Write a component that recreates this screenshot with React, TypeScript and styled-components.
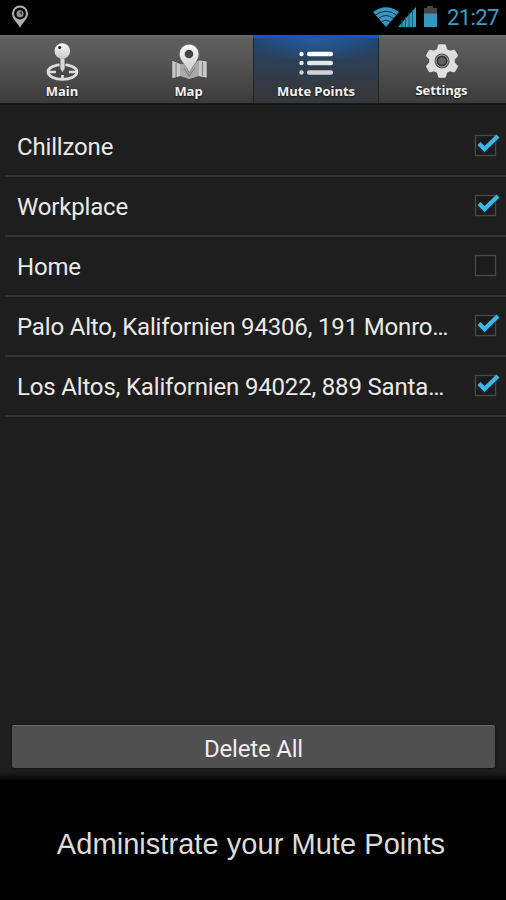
import React from 'react';
import styled, { createGlobalStyle, css } from 'styled-components';

const GlobalStyle = createGlobalStyle`
  * { box-sizing: border-box; }
  body { margin: 0; background: #000; }
`;

const Screen = styled.div`
  width: 506px;
  height: 900px;
  display: flex;
  flex-direction: column;
  background: #000;
  overflow: hidden;
  font-family: Roboto, 'Liberation Sans', sans-serif;
`;

const StatusBar = styled.header`
  height: 35px;
  flex: none;
  display: flex;
  justify-content: space-between;
  padding: 0 8px 0 11px;
`;

const StatusGroup = styled.div`
  display: flex;
  align-items: flex-start;
`;

const Clock = styled.span`
  color: #3b9fc8;
  font-size: 22px;
  line-height: 26px;
  margin-top: 5px;
  width: 51px;
  letter-spacing: -0.6px;
  white-space: nowrap;
`;

const TabBar = styled.nav`
  height: 70px;
  flex: none;
  display: grid;
  grid-template-columns: 253px 126px 127px;
  background: #1a1a1a;
  border-bottom: 2px solid #171717;
`;

const TabPair = styled.div`
  display: grid;
  grid-template-columns: 126px 127px;
`;

const Tab = styled.button<{ $active?: boolean }>`
  display: flex;
  flex-direction: column;
  align-items: center;
  margin: 0;
  padding: 5px 2px 0 0;
  border: 0;
  border-top: 2px solid #686868;
  background: linear-gradient(#5f5f5f, #555 35%, #3b3b3b);
  ${(p) =>
    p.$active &&
    css`
      border-top: 3px solid #1053dc;
      padding: 4px 0 0;
      box-shadow: inset 1px 0 #222, inset -1px 0 #222;
      background: radial-gradient(ellipse 65px 24px at 50% 0, rgba(36, 105, 185, 0.65), transparent),
        linear-gradient(#1f4773, #2c4056 35%, #333a43 70%, #383838);
    `}
`;

const TabLabel = styled.span<{ $lift?: number }>`
  font: bold 13px/16px 'Open Sans', 'Noto Sans', sans-serif;
  color: #f2f2f2;
  letter-spacing: -0.05px;
  margin-top: ${(p) => -(p.$lift ?? 0)}px;
  text-shadow: 0 1px 2px #111;
  white-space: nowrap;
`;

const Icon = styled.svg`
  display: block;
  flex: none;
`;

const Content = styled.main`
  flex: none;
  height: 675px;
  display: flex;
  flex-direction: column;
  justify-content: space-between;
  padding-top: 12px;
  background: linear-gradient(#1e1e1e 0 98.7%, #060606);
`;

const List = styled.ul`
  list-style: none;
  margin: 0;
  padding: 0 0 0 5px;
`;

const Row = styled.li`
  height: 60px;
  display: flex;
  align-items: center;
  justify-content: space-between;
  padding: 0 6px 0 12px;
  border-bottom: 2px solid #343434;
`;

const RowLabel = styled.span`
  color: #e9e9e9;
  font-size: 24px;
  line-height: 30px;
  padding-top: 2px;
  letter-spacing: -0.17px;
  white-space: nowrap;
`;

const DeleteButton = styled.button`
  height: 43px;
  margin: 0 11px 12px 12px;
  padding: 3px 0 0;
  border: 0;
  border-top: 1px solid #686868;
  border-radius: 2px;
  background: #505050;
  box-shadow: 0 1px 2px #111;
  color: #ededed;
  font: 24px/28px Roboto, sans-serif;
  letter-spacing: -0.2px;
`;

const Caption = styled.footer`
  flex: 1;
  display: flex;
  align-items: center;
  justify-content: center;
  padding: 8px 4px 0 0;
  color: #dcdcdc;
  font: 29px/32px 'Liberation Sans', Arial, sans-serif;
  letter-spacing: 0.05px;
  white-space: nowrap;
`;

const MetalGradient = ({ id }: { id: string }) => (
  <linearGradient id={id} x1="0" y1="0" x2="0" y2="1">
    <stop offset="0" stopColor="#fafafa" />
    <stop offset="1" stopColor="#c9c9c9" />
  </linearGradient>
);

const StatusPin = () => (
  <Icon width="19" height="35" viewBox="0 0 19 35">
    <path d="M9 28C7.500 23.500 1 19.500 1 13.500a8 8 0 0 1 16 0C17 19.500 10.500 23.500 9 28Z" fill="#b0b0b0" />
    <circle cx="9" cy="13.500" r="6" fill="#0b0b0b" />
    <circle cx="9" cy="13.800" r="3.500" fill="#929292" />
    <path d="M8 13l3-2v4z" fill="#444" />
  </Icon>
);

const StatusIcons = () => (
  <Icon width="74" height="35" viewBox="373 0 74 35">
    <path d="M373 12Q386 2.500 399 12L386 27Z" fill="#3697bf" />
    <g fill="none" stroke="#0b2f3d" strokeWidth="1">
      <path d="M375.500 15Q386 7.500 396.500 15M378.500 18.500Q386 12.500 393.500 18.500M381.500 22Q386 18.500 390.500 22" />
    </g>
    <path d="M398 27L416 7V27Z" fill="#3697bf" />
    <path d="M402 20V27M405.500 17V27M409 13V27M412.500 10V27" stroke="#1a5a73" strokeWidth="1" />
    <path d="M424 8h3V6h6v2h4v7h-13z" fill="#454545" />
    <path d="M424 13.500h13V27h-13z" fill="#3697bf" />
  </Icon>
);

const MainIcon = () => (
  <Icon width="40" height="41" viewBox="42 42 40 41">
    <defs><MetalGradient id="main-metal" /></defs>
    <ellipse cx="62.500" cy="72" rx="14.500" ry="7.300" fill="#484848" stroke="#ddd" strokeWidth="2.800" />
    <path d="M48 72h8M69 72h8M62.500 75v5" stroke="#ddd" strokeWidth="2.600" />
    <path d="M60 58h5v11l-2.500 3.500L60 69z" fill="#d8d8d8" stroke="#444" strokeWidth=".7" />
    <circle cx="62.300" cy="51" r="7.800" fill="url(#main-metal)" />
    <circle cx="59.700" cy="47.500" r="1.500" fill="#242424" />
  </Icon>
);

const MapIcon = () => (
  <Icon width="40" height="41" viewBox="169 42 40 41">
    <defs><MetalGradient id="map-metal" /></defs>
    <path d="M172.500 61l7.500 3 9 0 10-3.500 7.500 1v16l-7.500-1.500-10 3-9-3-7.500 2z" fill="#aaa" />
    <path d="M172.500 61l7.500 3v12l-7.500 2zM199 60.500l7.500 1v16L199 76z" fill="#c9c9c9" />
    <path d="M176 63v14M184 68l5 8 6-8M202.500 62v14" stroke="#818181" strokeWidth="1.200" fill="none" />
    <path d="M189.500 73C186.500 66 179.300 60.500 179.300 54a9.800 9.800 0 0 1 19.600 0C198.900 60.500 192.500 66 189.500 73Z" fill="url(#map-metal)" stroke="#666" strokeWidth=".6" />
    <circle cx="189" cy="54" r="4.300" fill="#454545" />
  </Icon>
);

const ListIcon = () => (
  <Icon width="40" height="41" viewBox="296 42 40 41">
    {[54, 63, 72.500].map((y, i) => (
      <g key={y} fill={['#fff', '#e4e4e4', '#d3d3d3'][i]}>
        <circle cx="301.500" cy={y} r="2.200" />
        <rect x="307" y={y - 2.200} width="26" height="4.400" rx="2" />
      </g>
    ))}
  </Icon>
);

const teeth = [0, 60, 120, 180, 240, 300];

const GearIcon = () => (
  <Icon width="40" height="41" viewBox="422 42 40 41">
    <g fill="#dedede">
      <circle cx="442" cy="61" r="12.800" />
      {teeth.map((angle) => (
        <path key={angle} d="M436.500 51l1.500-5.500q.3-1.200 1.500-1.200h5q1.200 0 1.500 1.200l1.500 5.500z" transform={`rotate(${angle} 442 61)`} />
      ))}
    </g>
    <circle cx="442" cy="61" r="7.500" fill="#4c4c4c" />
    <circle cx="442" cy="61" r="6" fill="none" stroke="#aaa" strokeWidth="1" />
    <circle cx="442" cy="61" r="4.600" fill="#606060" stroke="#333" strokeWidth="1.500" />
  </Icon>
);

const Checkbox = ({ checked }: { checked: boolean }) => (
  <Icon width="26" height="28" viewBox="0 1 26 28" role="checkbox" aria-checked={checked}>
    <rect x="1.500" y="4.500" width="20" height="20" fill="#1b1b1b" stroke="#484848" strokeWidth="1.400" />
    {checked && (
      <>
        <path d="M4.500 13.500l6 5.500L24 6" fill="none" stroke="#143746" strokeWidth="6" opacity=".6" />
        <path d="M5 12.500l5.500 5.500L24 5" fill="none" stroke="#3db6e6" strokeWidth="4.200" />
      </>
    )}
  </Icon>
);

const points = [
  { label: 'Chillzone', checked: true },
  { label: 'Workplace', checked: true },
  { label: 'Home', checked: false },
  { label: 'Palo Alto, Kalifornien 94306, 191 Monro…', checked: true },
  { label: 'Los Altos, Kalifornien 94022, 889 Santa…', checked: true },
];

export default function App() {
  return (
    <Screen>
      <GlobalStyle />
      <StatusBar>
        <StatusPin />
        <StatusGroup>
          <StatusIcons />
          <Clock>21:27</Clock>
        </StatusGroup>
      </StatusBar>
      <TabBar>
        <TabPair>
          <Tab><MainIcon /><TabLabel>Main</TabLabel></Tab>
          <Tab><MapIcon /><TabLabel>Map</TabLabel></Tab>
        </TabPair>
        <Tab $active><ListIcon /><TabLabel>Mute Points</TabLabel></Tab>
        <Tab><GearIcon /><TabLabel $lift={1}>Settings</TabLabel></Tab>
      </TabBar>
      <Content>
        <List>
          {points.map((point) => (
            <Row key={point.label}>
              <RowLabel>{point.label}</RowLabel>
              <Checkbox checked={point.checked} />
            </Row>
          ))}
        </List>
        <DeleteButton>Delete All</DeleteButton>
      </Content>
      <Caption>Administrate your Mute Points</Caption>
    </Screen>
  );
}
